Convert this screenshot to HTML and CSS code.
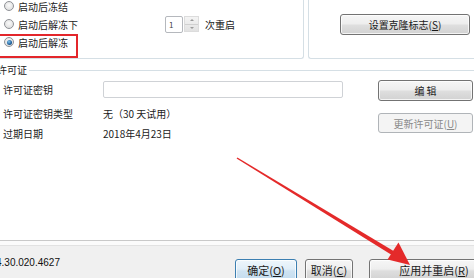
FILE: index.html
```html
<!DOCTYPE html>
<html lang="zh-CN">
<head>
<meta charset="utf-8">
<title>设置</title>
<link rel="stylesheet" href="styles.css">
</head>
<body>
<div class="page">
  <div class="top">
    <div class="grp grp-a">
      <div class="radios">
        <div class="radio"><span class="rb"></span><span>启动后冻结</span></div>
        <div class="radio"><span class="rb"></span><span>启动后解冻下</span></div>
        <div class="radio mark"><span class="rb on"></span><span>启动后解冻</span></div>
      </div>
      <div class="spin">
        <div class="spin-input">1</div>
        <div class="spin-btns"><span class="up"></span><span class="down"></span></div>
        <span class="spin-label">次重启</span>
      </div>
    </div>
    <div class="grp grp-b">
      <div class="btn wide">设置克隆标志(<u>S</u>)</div>
    </div>
  </div>

  <div class="lic">
    <div class="lic-head"><span class="lic-title">许可证</span><span class="lic-line"></span></div>
    <div class="lic-body">
      <div class="lic-left">
        <div class="lrow r1"><span class="lab">许可证密钥</span><span class="key"></span></div>
        <div class="lrow r2"><span class="lab">许可证密钥类型</span><span class="val">无（30 天试用）</span></div>
        <div class="lrow"><span class="lab">过期日期</span><span class="val">2018年4月23日</span></div>
      </div>
      <div class="lic-right">
        <div class="btn side b1">编 辑</div>
        <div class="btn side b2 dis">更新许可证(<u>U</u>)</div>
      </div>
    </div>
  </div>

  <div class="bar">
    <span class="ver">4.30.020.4627</span>
    <div class="btn foot ok">确定(<u>O</u>)</div>
    <div class="btn foot cancel">取消(<u>C</u>)</div>
    <div class="btn foot apply">应用并重启(<u>R</u>)</div>
  </div>

  <svg class="arrow" width="474" height="278" viewBox="0 0 474 278">
    <polygon fill="#e42a2a" points="236.6,158.4 237.4,157.6 394.4,251.4 392.2,255.2"/>
    <polygon fill="#e42a2a" points="410,265 387.5,259.5 398.5,242.5"/>
  </svg>
</div>
</body>
</html>
```

FILE: styles.css
```css
* { box-sizing: border-box; }
html, body { margin: 0; padding: 0; background: #fff; }
body {
  font-family: "Noto Sans CJK SC", "Noto Sans", sans-serif;
  font-size: 10px;
  color: #222;
}
.page {
  position: relative;
  width: 474px;
  height: 278px;
  overflow: hidden;
  display: flex;
  flex-direction: column;
}
u { text-decoration: underline; }

/* top groups */
.top { display: flex; height: 59px; flex: 0 0 59px; }
.grp { border: 1px solid #d5dfe5; border-top: none; }
.grp-a {
  width: 304px;
  border-left: none;
  border-radius: 0 0 3px 0;
  display: flex;
}
.grp-b {
  flex: 1;
  margin-left: 4px;
  border-right: none;
  border-radius: 0 0 0 3px;
  padding-left: 31px;
  padding-top: 14px;
}
.radios {
  width: 165px;
  margin-top: -3px;
  display: flex;
  flex-direction: column;
}
.radio {
  position: relative;
  height: 18px;
  width: 76px;
  display: flex;
  align-items: center;
  gap: 4px;
  padding-left: 4px;
  white-space: nowrap;
}
.rb {
  width: 10px;
  height: 10px;
  border-radius: 50%;
  border: 1px solid #8f9196;
  background: radial-gradient(circle at 50% 40%, #fafafa 0, #e2e2e2 70%, #d0d0d0 100%);
  flex: 0 0 10px;
  position: relative;
}
.rb.on::after {
  content: "";
  position: absolute;
  left: 1.5px; top: 1.5px;
  width: 5px; height: 5px;
  border-radius: 50%;
  background: radial-gradient(circle at 40% 35%, #7fc3ef 0, #1f5f99 60%, #17406a 100%);
}
.radio.mark::after {
  content: "";
  position: absolute;
  left: -3px;
  top: 1px;
  width: 77px;
  height: 20px;
  border: 2px solid #e3262b;
}
.spin {
  display: flex;
  align-items: flex-start;
  margin-top: 16px;
  height: 17px;
}
.spin-input {
  width: 18px;
  height: 17px;
  border: 1px solid #b5b8bd;
  border-radius: 2px;
  font-size: 8px;
  line-height: 15px;
  padding-left: 3px;
  color: #444;
}
.spin-btns {
  width: 15px;
  height: 16px;
  margin-left: 1px;
  display: flex;
  flex-direction: column;
  border: 1px solid #dcdcdc;
  background: linear-gradient(#f4f4f4, #e2e2e2);
}
.spin-btns span { flex: 1; position: relative; }
.spin-btns .up { border-bottom: 1px solid #d0d0d0; }
.spin-btns .up::after, .spin-btns .down::after {
  content: "";
  position: absolute;
  left: 5px;
  top: 2px;
  border-left: 2px solid transparent;
  border-right: 2px solid transparent;
}
.spin-btns .up::after { border-bottom: 2px solid #9a9a9a; }
.spin-btns .down::after { border-top: 2px solid #9a9a9a; top: 2px; }
.spin-label { margin-left: 6px; line-height: 17px; }

/* buttons */
.btn {
  display: flex;
  align-items: center;
  justify-content: center;
  height: 21px;
  border: 1px solid #737373;
  border-radius: 3px;
  background: linear-gradient(#f6f6f6 0%, #eeeeee 45%, #dedede 55%, #d2d2d2 100%);
  box-shadow: inset 0 0 0 1px rgba(255,255,255,0.75);
  color: #1a1a1a;
  white-space: nowrap;
}
.btn.wide { width: 130px; }
.btn.dis {
  border-color: #b0b4b8;
  background: #f4f4f4;
  color: #8a8a8a;
  box-shadow: none;
}

/* license */
.lic { margin-top: 4px; }
.lic-head { display: flex; align-items: center; height: 14px; }
.lic-title { margin-left: -3px; line-height: 14px; }
.lic-line { flex: 1; height: 1px; background: #d5dfe5; margin-left: 2px; }
.lic-body { display: flex; margin-top: 2px; }
.lic-left { width: 378px; padding-left: 3px; display: flex; flex-direction: column; }
.lrow { display: flex; align-items: center; height: 20px; }
.lrow.r1 { margin-bottom: 4px; }
.lab { width: 100px; }
.key {
  width: 240px;
  height: 17px;
  border: 1px solid #cfd2d6;
  border-radius: 2px;
}
.lic-right { display: flex; flex-direction: column; }
.btn.side { width: 95px; }
.btn.b1 { margin-top: 1px; }
.btn.b2 { margin-top: 12px; height: 20px; }

/* bottom bar */
.bar {
  margin-top: auto;
  flex: 0 0 38px;
  height: 38px;
  border-top: 1px solid #c9c9c9;
  background: linear-gradient(#fbfbfb 0, #fbfbfb 4px, #e2e2e2 4px, #e2e2e2 5px, #f0f0f0 5px);
  display: flex;
  align-items: flex-start;
  padding-top: 18px;
}
.ver {
  font-family: "Liberation Sans", Arial, sans-serif;
  font-size: 10px;
  line-height: 12px;
  margin-left: -4px;
  margin-top: -2px;
  width: 239px;
  flex: 0 0 239px;
  color: #111;
}
.btn.foot { flex: 0 0 auto; height: 22px; font-size: 11px; }
.btn.ok {
  width: 62px;
  border-color: #3c7fb1;
  background: linear-gradient(#eef6fb 0%, #e1eef8 45%, #cfe3f2 55%, #c3dcef 100%);
}
.btn.cancel { width: 48px; margin-left: 8px; }
.btn.apply { width: 130px; margin-left: 16px; }

.arrow { position: absolute; left: 0; top: 0; pointer-events: none; }
```
